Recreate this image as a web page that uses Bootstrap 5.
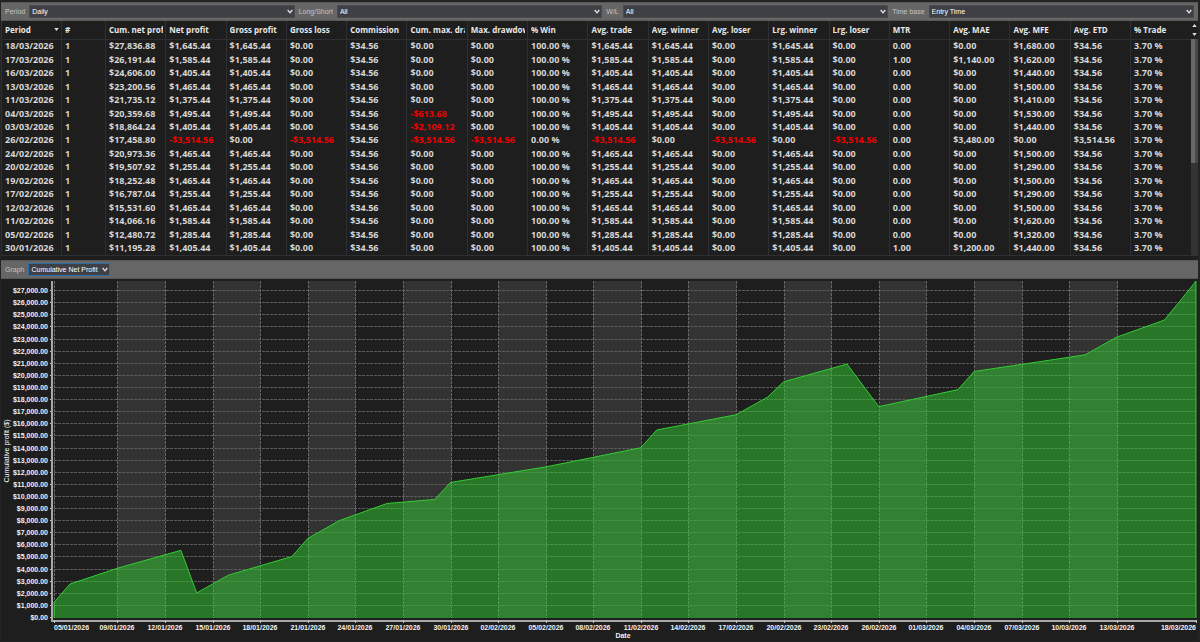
<!DOCTYPE html>
<html lang="en">
<head>
<meta charset="utf-8">
<meta name="viewport" content="width=device-width, initial-scale=1">
<title>Performance by period</title>
<link rel="stylesheet" href="https://cdn.jsdelivr.net/npm/bootstrap@5.3.0/dist/css/bootstrap.min.css">
<style>
  :root { --ink: #1e1e1e; --rule: #2f2f31; --bar: #666; --field: #3f3f46; }
  body { background: var(--ink); color: #d6d6d6; font-family: "Liberation Sans", Arial, sans-serif; font-size: 7px; line-height: 10px; }
  .shell { border: 2px solid #232323; border-width: 2px 2px 1px 1px; }
  .toolbar { background: var(--bar); border: 1px solid #575757; border-left: 0; border-right: 0; height: 19px; color: #c4c4c4; }
  .picker { appearance: none; border: 1px solid #4b4b50; border-radius: 0; height: 13px; padding: 0 9px 0 2px; color: #fff; font-size: 7px; line-height: 10px;
    background: var(--field) url("data:image/svg+xml,%3Csvg xmlns='http://www.w3.org/2000/svg' viewBox='0 0 6 5'%3E%3Cpath d='M.7 1 3 3.8 5.3 1' fill='none' stroke='%23e8e8e8' stroke-width='1.3'/%3E%3C/svg%3E") no-repeat right 1px center / 6px 5px; }
  .picker-wide { flex: 1 1 0; min-width: 0; }
  .picker-active { border-color: #2c6ea6; width: 82px; }
  .grid-area { border-bottom: 1px solid var(--rule); }
  .trades { table-layout: fixed; width: 100%; height: 234px; font: 700 9px/12px "Open Sans", "Noto Sans", sans-serif; }
  .trades th, .trades td { padding: 0 2px 0 3px; overflow: hidden; white-space: nowrap; border-left: 1px solid var(--rule); vertical-align: middle; }
  .trades th { font-size: 8px; font-weight: 700; color: #e8e8e8; height: 18px; border-bottom: 1px solid var(--rule); }
  .clip { overflow: hidden; }
  .trades .loss { color: #f00000; }
  .c-period { width: 60px; } .c-count { width: 44px; }
  .sort { width: 5px; height: 3px; fill: #ddd; }
  .rail { width: 7px; background: #333; }
  .rail-head { height: 18px; background: var(--ink); }
  .rail-head button { border: 0; background: none; line-height: 0; }
  .rail-head svg { width: 5px; height: 3px; fill: #ddd; }
  .thumb { height: 124px; background: linear-gradient(90deg, #686868 4px, #484848 4px); }
  .chart-box { min-height: 300px; }
  .chart-box svg { width: 100%; height: 100%; display: block; }
  .chart-box text { fill: #f2f2f2; font-size: 7px; font-weight: 700; }
  .chart-box .axis-title { font-weight: 400; fill: #fff; }
  .gridline { stroke: #666; stroke-dasharray: 3 1; }
  .gridrow { stroke: #5c5c5c; stroke-dasharray: 3 1; }
  .axis { stroke: #a8a8ac; stroke-width: 2; }
  .tick { stroke: #c8c8c8; }
  .band { fill: #333; }
  .area { fill: #32cd32; fill-opacity: .5; }
  .curve { fill: none; stroke: #32cd32; }
</style>
</head>
<body>
<main class="shell d-flex flex-column min-vh-100">
  <form class="toolbar d-flex align-items-center ps-1 pe-1 gap-1">
    <label for="period">Period</label><select id="period" class="picker picker-wide"><option>Daily</option></select>
    <label for="side">Long/Short</label><select id="side" class="picker picker-wide"><option>All</option></select>
    <label for="wl">W/L</label><select id="wl" class="picker picker-wide"><option>All</option></select>
    <label for="base">Time base</label><select id="base" class="picker picker-wide"><option>Entry Time</option></select>
  </form>
  <section class="grid-area d-flex">
    <table class="trades">
      <thead><tr id="head"></tr></thead>
      <tbody id="rows"></tbody>
    </table>
    <div class="rail d-flex flex-column flex-shrink-0">
      <div class="rail-head d-flex flex-column justify-content-around align-items-center">
        <button class="p-0" type="button" aria-label="Scroll up"><svg viewBox="0 0 6 4"><path d="M0 4 3 0 6 4z"/></svg></button>
        <button class="p-0" type="button" aria-label="Scroll down"><svg viewBox="0 0 6 4"><path d="M0 0 3 4 6 0z"/></svg></button>
      </div>
      <div class="thumb"></div>
    </div>
  </section>
  <form class="toolbar d-flex align-items-center ps-1 mt-1 gap-1">
    <label for="graph">Graph</label><select id="graph" class="picker picker-active"><option>Cumulative Net Profit</option></select>
  </form>
  <section class="chart-box flex-grow-1 position-relative"><div class="position-absolute top-0 start-0 w-100 h-100"><svg id="chart" role="img" aria-label="Cumulative net profit"></svg></div></section>
</main>
<script src="https://cdn.jsdelivr.net/npm/bootstrap@5.3.0/dist/js/bootstrap.bundle.min.js"></script>
<script>
const money = v => (v < 0 ? '-$' : '$') + Math.abs(v).toLocaleString('en-US', {minimumFractionDigits: 2, maximumFractionDigits: 2});
const columns = ['Period', '#', 'Cum. net profit', 'Net profit', 'Gross profit', 'Gross loss', 'Commission', 'Cum. max. drawdown', 'Max. drawdown', '% Win', 'Avg. trade', 'Avg. winner', 'Avg. loser', 'Lrg. winner', 'Lrg. loser', 'MTR', 'Avg. MAE', 'Avg. MFE', 'Avg. ETD', '% Trade'];
// date, cumulative, net, cumulative drawdown, MTR, MAE, MFE, ETD
const trades = [
  ['18/03/2026', 27836.88, 1645.44, 0, 0, 0, 1680, 34.56],
  ['17/03/2026', 26191.44, 1585.44, 0, 1, 1140, 1620, 34.56],
  ['16/03/2026', 24606.00, 1405.44, 0, 0, 0, 1440, 34.56],
  ['13/03/2026', 23200.56, 1465.44, 0, 0, 0, 1500, 34.56],
  ['11/03/2026', 21735.12, 1375.44, 0, 0, 0, 1410, 34.56],
  ['04/03/2026', 20359.68, 1495.44, -613.68, 0, 0, 1530, 34.56],
  ['03/03/2026', 18864.24, 1405.44, -2109.12, 0, 0, 1440, 34.56],
  ['26/02/2026', 17458.80, -3514.56, -3514.56, 0, 3480, 0, 3514.56],
  ['24/02/2026', 20973.36, 1465.44, 0, 0, 0, 1500, 34.56],
  ['20/02/2026', 19507.92, 1255.44, 0, 0, 0, 1290, 34.56],
  ['19/02/2026', 18252.48, 1465.44, 0, 0, 0, 1500, 34.56],
  ['17/02/2026', 16787.04, 1255.44, 0, 0, 0, 1290, 34.56],
  ['12/02/2026', 15531.60, 1465.44, 0, 0, 0, 1500, 34.56],
  ['11/02/2026', 14066.16, 1585.44, 0, 0, 0, 1620, 34.56],
  ['05/02/2026', 12480.72, 1285.44, 0, 0, 0, 1320, 34.56],
  ['30/01/2026', 11195.28, 1405.44, 0, 1, 1200, 1440, 34.56]
];
document.getElementById('head').innerHTML = columns.map((c, i) => i === 0
  ? `<th class="c-period" scope="col"><span class="d-flex justify-content-between align-items-center">${c}<svg class="sort" viewBox="0 0 6 4"><path d="M0 0 3 4 6 0z"/></svg></span></th>`
  : `<th scope="col"${i === 1 ? ' class="c-count"' : ''}><div class="clip">${c}</div></th>`).join('');
document.getElementById('rows').innerHTML = trades.map(([date, cum, net, dd, mtr, mae, mfe, etd]) => {
  const win = Math.max(net, 0), loss = Math.min(net, 0);
  const cells = [date, '1', money(cum), money(net), money(win), money(loss), '$34.56', money(dd), money(loss), (net > 0 ? '100.00' : '0.00') + ' %',
    money(net), money(win), money(loss), money(win), money(loss), mtr.toFixed(2), money(mae), money(mfe), money(etd), '3.70 %'];
  return '<tr>' + cells.map(c => `<td${c[0] === '-' ? ' class="loss"' : ''}>${c}</td>`).join('') + '</tr>';
}).join('');

// Day offset from 5 January, cumulative profit
const start = Date.UTC(2026, 0, 5), DAY = 864e5;
const early = [[0, 1285], [1, 2800], [4, 4110], [8, 5590], [9, 2070], [11, 3540], [15, 5080], [16, 6570], [18, 8050], [21, 9460], [24, 9789.84]];
const late = trades.map(t => { const [d, m, y] = t[0].split('/').map(Number); return [(Date.UTC(y, m - 1, d) - start) / DAY, t[1]]; }).reverse();
const points = early.concat(late);
const ticks = [0];
for (let d = 4; d <= 67; d += 3) ticks.push(d);
function drawChart() {
  const svg = document.getElementById('chart');
  const { width: w, height: h } = svg.getBoundingClientRect();
  const left = 53, right = w - 2, top = 2, base = h - 23;
  const x = d => left + (right - left) * d / 72;
  const y = v => base - (base - top) * v / 27836.88;
  const gx = d => Math.round(x(d)) + .5, gy = v => Math.round(y(v)) - .5;
  const line = (c, a, b, p, q) => `<line class="${c}" x1="${a}" y1="${b}" x2="${p}" y2="${q}"/>`;
  let s = '';
  for (let i = 1; i < ticks.length - 1; i += 2) s += `<rect class="band" x="${gx(ticks[i])}" y="${top}" width="${gx(ticks[i + 1]) - gx(ticks[i])}" height="${base - top}"/>`;
  for (let k = 0; k <= 27; k++) {
    const v = k * 1000;
    if (k) s += line('gridrow', left, gy(v), right, gy(v));
    s += line('tick', 49, gy(v), 51, gy(v)) + `<text x="47" y="${Math.round(gy(v) + 2)}" text-anchor="end">${money(v)}</text>`;
  }
  ticks.forEach(d => s += line('gridline', gx(d), top, gx(d), base));
  const path = points.map(p => x(p[0]).toFixed(2) + ' ' + y(p[1]).toFixed(2)).join('L');
  s += `<path class="area" d="M${left} ${base}L${path}L${right} ${base}Z"/><path class="curve" d="M${left} ${base}L${path}L${right} ${base}"/>`;
  s += line('axis', 51, top, 51, base + 3) + line('axis', 50, base + 3, right, base + 3);
  ticks.concat(72).forEach(d => {
    const label = new Date(start + d * DAY).toLocaleDateString('en-GB', {timeZone: 'UTC'});
    const anchor = d === 0 ? 'start' : d === 72 ? 'end' : 'middle';
    s += line('tick', gx(d), base + 2, gx(d), base + 5) + `<text x="${Math.round(x(d))}" y="${base + 12}" text-anchor="${anchor}">${label}</text>`;
  });
  s += `<text x="${Math.round((right + left) / 2) - 2}" y="${base + 20}" text-anchor="middle">Date</text>`;
  s += `<text class="axis-title" transform="translate(8 ${Math.round((top + base) / 2) + 1}) rotate(-90)" text-anchor="middle">Cumulative profit ($)</text>`;
  svg.innerHTML = s;
}
drawChart();
addEventListener('resize', drawChart);
</script>
</body>
</html>
